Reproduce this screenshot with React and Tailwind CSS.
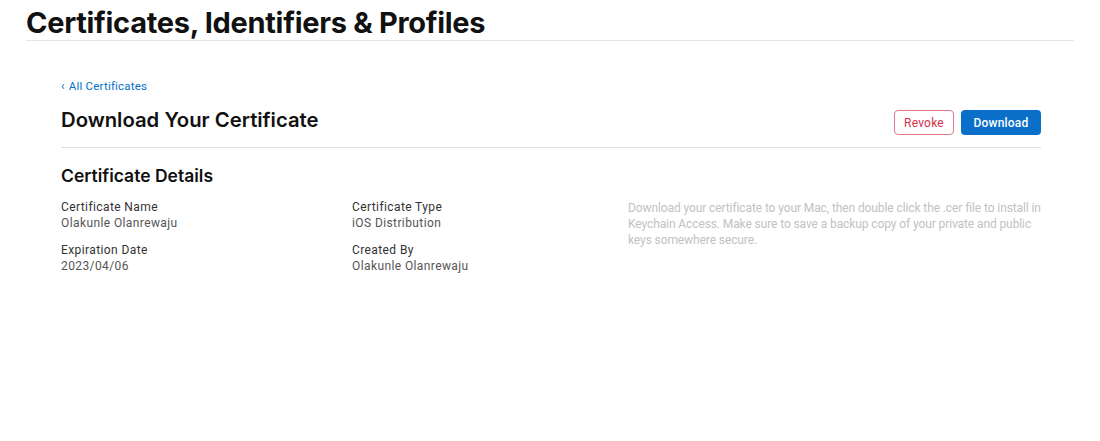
export default function App() {
  return (
    <div className="min-h-[441px] bg-white text-[#1d1d1f]" style={{ fontFamily: 'Inter, "Liberation Sans", sans-serif' }}>
      <header className="px-[26px] pt-[5px]">
        <h1 className="border-b border-[#e5e5e5] text-[29px] font-bold leading-[35px] tracking-[-0.3px] text-[#111]">
          Certificates, Identifiers &amp; Profiles
        </h1>
      </header>

      <main className="mx-[61px] mr-[59px] pt-[38px]">
        <a
          href="#"
          className="flex items-center gap-[4px] text-[11.5px] leading-[14px] tracking-[0.2px] text-[#0070c9]"
          style={{ fontFamily: 'Roboto, "Liberation Sans", sans-serif' }}
        >
          <span className="text-[12px]">‹</span>
          All Certificates
        </a>

        <div className="mt-[14px] flex items-end justify-between border-b border-[#e0e0e0] pb-[12px]">
          <h2 className="pb-[2px] text-[20.3px] font-semibold leading-[26px] text-[#111]">Download Your Certificate</h2>
          <div className="flex gap-[7px]" style={{ fontFamily: 'Roboto, "Liberation Sans", sans-serif' }}>
            <button className="h-[25px] w-[60px] rounded-[4px] border border-[#e27a89] text-[12px] tracking-[0.2px] text-[#d6324a]">
              Revoke
            </button>
            <button className="h-[25px] w-[80px] rounded-[4px] bg-[#0a6fc9] text-[12px] font-medium tracking-[0.2px] text-white">
              Download
            </button>
          </div>
        </div>

        <h3 className="mt-[17px] text-[17.5px] font-semibold leading-[22px] text-[#111]">Certificate Details</h3>

        <div
          className="mt-[12px] grid grid-cols-[291px_276px_1fr] text-[12px] leading-[16px]"
          style={{ fontFamily: 'Roboto, "Liberation Sans", sans-serif' }}
        >
          <div className="flex flex-col gap-[11px] tracking-[0.4px]">
            <div>
              <div className="text-[#333]">Certificate Name</div>
              <div className="text-[#555]">Olakunle Olanrewaju</div>
            </div>
            <div>
              <div className="text-[#333]">Expiration Date</div>
              <div className="text-[#555]">2023/04/06</div>
            </div>
          </div>
          <div className="flex flex-col gap-[11px] tracking-[0.4px]">
            <div>
              <div className="text-[#333]">Certificate Type</div>
              <div className="text-[#555]">iOS Distribution</div>
            </div>
            <div>
              <div className="text-[#333]">Created By</div>
              <div className="text-[#555]">Olakunle Olanrewaju</div>
            </div>
          </div>
          <p className="pt-[1px] text-[12px] leading-[16px] tracking-[-0.1px] text-[#c2c2c2]">
            Download your certificate to your Mac, then double click the .cer file to install in Keychain Access. Make sure to save a backup copy of your private and public keys somewhere secure.
          </p>
        </div>
      </main>
    </div>
  )
}
